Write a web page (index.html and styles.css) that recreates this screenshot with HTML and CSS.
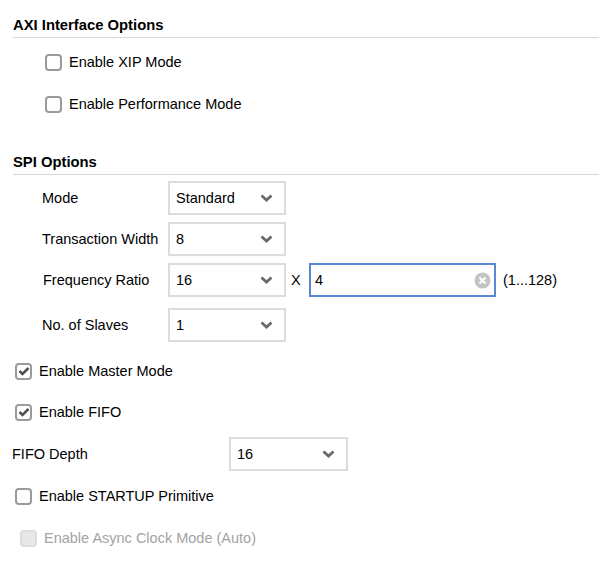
FILE: index.html
```html
<!DOCTYPE html>
<html>
<head>
<meta charset="utf-8">
<link rel="stylesheet" href="styles.css">
</head>
<body>
<div class="panel">
  <div class="section-title">AXI Interface Options</div>
  <label class="check-row axi first"><span class="box"></span><span>Enable XIP Mode</span></label>
  <label class="check-row axi"><span class="box"></span><span>Enable Performance Mode</span></label>

  <div class="section-title spi">SPI Options</div>
  <div class="field-row mode-row">
    <span class="field-label">Mode</span>
    <div class="select"><span>Standard</span><svg class="chev" width="13" height="8" viewBox="0 0 13 8"><path d="M1.5 1.5 L6.5 6 L11.5 1.5" fill="none" stroke="#6a6a6a" stroke-width="2.8"/></svg></div>
  </div>
  <div class="field-row gap7">
    <span class="field-label">Transaction Width</span>
    <div class="select"><span>8</span><svg class="chev" width="13" height="8" viewBox="0 0 13 8"><path d="M1.5 1.5 L6.5 6 L11.5 1.5" fill="none" stroke="#6a6a6a" stroke-width="2.8"/></svg></div>
  </div>
  <div class="field-row gap7">
    <span class="field-label shift1">Frequency Ratio</span>
    <div class="select"><span>16</span><svg class="chev" width="13" height="8" viewBox="0 0 13 8"><path d="M1.5 1.5 L6.5 6 L11.5 1.5" fill="none" stroke="#6a6a6a" stroke-width="2.8"/></svg></div>
    <span class="times">X</span>
    <div class="text-input"><span>4</span><svg class="clear" width="17" height="17" viewBox="0 0 17 17"><circle cx="8.5" cy="8.5" r="8" fill="#c4c4c4"/><path d="M5.5 5.5 L11.5 11.5 M11.5 5.5 L5.5 11.5" stroke="#fff" stroke-width="2.2"/></svg></div>
    <span class="range">(1...128)</span>
  </div>
  <div class="field-row gap11">
    <span class="field-label">No. of Slaves</span>
    <div class="select"><span>1</span><svg class="chev" width="13" height="8" viewBox="0 0 13 8"><path d="M1.5 1.5 L6.5 6 L11.5 1.5" fill="none" stroke="#6a6a6a" stroke-width="2.8"/></svg></div>
  </div>

  <label class="check-row outer master"><span class="box checked"><svg width="12" height="10" viewBox="0 0 12 10"><path d="M1.5 5 L4.5 8 L10.5 2" fill="none" stroke="#505050" stroke-width="2.5"/></svg></span><span>Enable Master Mode</span></label>
  <label class="check-row outer gap7"><span class="box checked"><svg width="12" height="10" viewBox="0 0 12 10"><path d="M1.5 5 L4.5 8 L10.5 2" fill="none" stroke="#505050" stroke-width="2.5"/></svg></span><span>Enable FIFO</span></label>

  <div class="field-row fifo gap8">
    <span class="fifo-label">FIFO Depth</span>
    <div class="select wide"><span>16</span><svg class="chev" width="13" height="8" viewBox="0 0 13 8"><path d="M1.5 1.5 L6.5 6 L11.5 1.5" fill="none" stroke="#6a6a6a" stroke-width="2.8"/></svg></div>
  </div>

  <label class="check-row outer gap8"><span class="box"></span><span>Enable STARTUP Primitive</span></label>
  <label class="check-row disabled gap8"><span class="box"></span><span>Enable Async Clock Mode (Auto)</span></label>
</div>
</body>
</html>
```

FILE: styles.css
```css
html, body {
  margin: 0;
  padding: 0;
  background: #ffffff;
}

body {
  font-family: "Liberation Sans", Arial, sans-serif;
  font-size: 14.5px;
  color: #000000;
}

.panel {
  display: flex;
  flex-direction: column;
  padding-top: 13px;
}

.section-title {
  margin-left: 13px;
  height: 24px;
  line-height: 24px;
  font-size: 14.8px;
  font-weight: bold;
  border-bottom: 1px solid #d6d6d6;
}

.section-title.spi {
  margin-top: 25px;
}

.check-row {
  display: flex;
  align-items: center;
  gap: 7px;
  height: 34px;
}

.check-row.axi {
  height: 42px;
  padding-left: 45px;
}

.check-row.axi.first {
  margin-top: 3px;
}

.check-row.outer {
  padding-left: 15px;
}

.check-row.master {
  margin-top: 12px;
}

.check-row.disabled {
  padding-left: 20px;
  color: #a3a3a3;
}

.box {
  width: 17px;
  height: 17px;
  box-sizing: border-box;
  border: 2px solid #9a9a9a;
  border-radius: 4px;
  background: #ffffff;
  display: flex;
  align-items: center;
  justify-content: center;
  flex: none;
}

.box svg {
  display: block;
}

.check-row.disabled .box {
  border-color: #dddddd;
  background: #e8e8e8;
}

.field-row {
  display: flex;
  align-items: center;
  height: 34px;
  padding-left: 42px;
}

.field-row.mode-row {
  margin-top: 6px;
}

.gap7 {
  margin-top: 7px;
}

.gap8 {
  margin-top: 8px;
}

.gap11 {
  margin-top: 11px;
}

.field-label {
  width: 126px;
  flex: none;
}

.field-label.shift1 {
  padding-left: 1px;
  width: 125px;
}

.select {
  width: 118px;
  height: 34px;
  box-sizing: border-box;
  border: 2px solid #dcdcdc;
  padding: 0 11px 0 6px;
  display: flex;
  align-items: center;
  justify-content: space-between;
  flex: none;
}

.select.wide {
  width: 119px;
}

.chev {
  display: block;
}

.times {
  margin-left: 5px;
  width: 18px;
}

.text-input {
  width: 187px;
  height: 34px;
  box-sizing: border-box;
  border: 2px solid #5a86d6;
  padding: 0 3px 0 4px;
  display: flex;
  align-items: center;
  justify-content: space-between;
}

.clear {
  display: block;
}

.range {
  margin-left: 7px;
}

.field-row.fifo {
  padding-left: 12px;
}

.fifo-label {
  width: 217px;
  flex: none;
}
```
